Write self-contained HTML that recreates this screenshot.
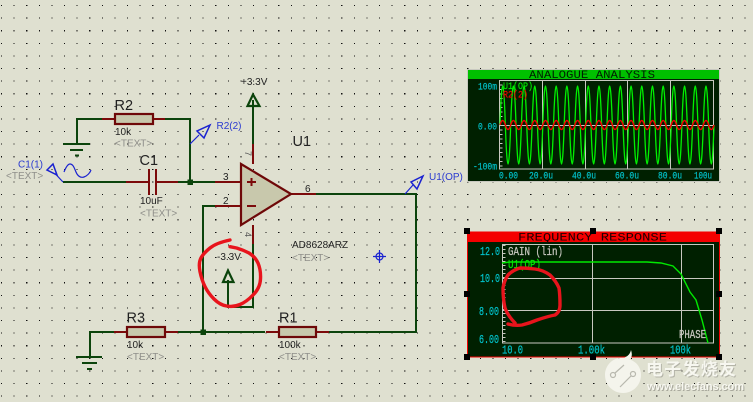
<!DOCTYPE html>
<html><head><meta charset="utf-8"><style>
html,body{margin:0;padding:0;background:#dfe0d0;overflow:hidden}
svg{display:block}
.s{font-family:"Liberation Sans",sans-serif}
.m{font-family:"Liberation Mono",monospace;font-size:10.5px;stroke-width:.2px}
.t{font-family:"Liberation Mono",monospace;font-size:12px;stroke-width:.25px}
.ti{font-family:"Liberation Mono",monospace;font-size:11px}
.c{fill:#00c0c8;stroke:#00c0c8}
.g{fill:#8f8f8a;font-size:10px;font-family:"Liberation Sans",sans-serif}
.k{fill:#222;font-size:10px;font-family:"Liberation Sans",sans-serif}
.b{fill:#2a3ad0;font-size:10px;font-family:"Liberation Sans",sans-serif}
.h{fill:#222;font-size:14.500px;font-family:"Liberation Sans",sans-serif}
</style></head><body>
<svg width="753" height="402" viewBox="0 0 753 402" xmlns="http://www.w3.org/2000/svg">
<defs><filter id="bl"><feGaussianBlur stdDeviation="0.35"/></filter></defs>
<rect width="753" height="402" fill="#dfe0d0"/>
<path shape-rendering="crispEdges" fill="none" stroke="#111" stroke-width="1.1" stroke-dasharray="1.1 11.5" d="M1 5.5H753M1 18.1H753M1 30.7H753M1 43.3H753M1 55.9H753M1 68.5H753M1 81.1H753M1 93.7H753M1 106.3H753M1 118.9H753M1 131.5H753M1 144.1H753M1 156.7H753M1 169.3H753M1 181.9H753M1 194.5H753M1 207.1H753M1 219.7H753M1 232.3H753M1 244.9H753M1 257.5H753M1 270.1H753M1 282.7H753M1 295.3H753M1 307.9H753M1 320.5H753M1 333.1H753M1 345.7H753M1 358.3H753M1 370.9H753M1 383.5H753M1 396.1H753"/>

<!-- green wires -->
<g fill="none" stroke="#0c440c" stroke-width="2">
<path d="M63 182H126M178 182H215M77 144V119H102M165 119H190V182"/>
<path d="M63 144H90M70 150H83M75 155.500H79"/>
<path d="M253 144V100M316 194H416V332H329M265 332H178M114 332H90V357M203 332V206H215M253 244V307H228V280"/>
<path d="M76 357H102M82 363H97M87 369H92"/>
<path d="M253 94.500L247.500 106H259.500Z" stroke-width="2.200"/>
<path d="M228 270.500L223 282H233.500Z" stroke-width="2.200"/>
</g>
<rect x="187.500" y="179.500" width="5.500" height="5.500" fill="#0c440c"/>
<rect x="200.500" y="329.500" width="5.500" height="5.500" fill="#0c440c"/>

<!-- red pins -->
<g fill="none" stroke="#7c0a0a" stroke-width="2">
<path d="M102 119H115M153 119H165M126 182H149M156 182H178M149 169V195M156 169V195"/>
<path d="M215 182H241M215 206H241M291 194H316M253 144V164M253 225V244M114 332H127M165 332H178M266 332H279M316 332H329"/>
</g>
<g stroke="#6e0808" stroke-width="2.200" fill="#c8c8ac">
<rect x="115" y="114" width="38" height="10"/>
<rect x="127" y="327" width="38" height="10"/>
<rect x="279" y="327" width="37" height="10"/>
<path d="M241 164V225L291 194Z"/>
</g>
<path d="M247 182H256M251.500 178V186M247 206H256" stroke="#7c0a0a" stroke-width="2" fill="none"/>

<!-- blue -->
<g fill="none" stroke="#1a22d0" stroke-width="1.200">
<path d="M63 182L55 173.500"/>
<path d="M47 170L53 164L57 175Z" stroke-width="1.500"/>
<path d="M64 172C66 167 68 164 70 164C74 164 75 171 77 174C79 177 81 178 84 177C87 176 90 173 91 170"/>
<path d="M190 144L199 135"/>
<path d="M210 125L197 131L204 138Z" stroke-width="1.500"/>
<path d="M405 194L413 185"/>
<path d="M423 176L411 182L417 189Z" stroke-width="1.500"/>
<circle cx="379.500" cy="256.500" r="3.500"/>
<path d="M379.500 250V263M373 256.500H386"/>
</g>

<!-- schematic labels -->
<text class="h" x="114.500" y="110">R2</text>
<text class="h" x="139.500" y="165">C1</text>
<text class="h" x="292.500" y="146">U1</text>
<text class="h" x="126.500" y="322.500">R3</text>
<text class="h" x="279" y="322.500">R1</text>
<text class="k" x="115" y="135">10k</text>
<text class="g" x="115" y="146.500">&lt;TEXT&gt;</text>
<text class="k" x="140" y="204">10uF</text>
<text class="g" x="140" y="216.500">&lt;TEXT&gt;</text>
<text class="b" x="18" y="167.500">C1(1)</text>
<text class="g" x="6" y="179">&lt;TEXT&gt;</text>
<text class="b" x="216.500" y="129">R2(2)</text>
<text class="b" x="429" y="180">U1(OP)</text>
<text class="k" x="241" y="85">+3.3V</text>
<text class="k" x="217" y="260">-3.3V</text>
<text class="k" x="292" y="248">AD8628ARZ</text>
<text class="g" x="292" y="261">&lt;TEXT&gt;</text>
<text class="k" x="127" y="348">10k</text>
<text class="g" x="127" y="360">&lt;TEXT&gt;</text>
<text class="k" x="279" y="348">100k</text>
<text class="g" x="279" y="360">&lt;TEXT&gt;</text>
<text class="k" x="223" y="180">3</text>
<text class="k" x="223" y="204">2</text>
<text class="k" x="305" y="192">6</text>
<text transform="translate(245,151) rotate(90)" style="font-size:9px;fill:#555;font-family:'Liberation Sans',sans-serif">7</text>
<text transform="translate(245,232) rotate(90)" style="font-size:9px;fill:#555;font-family:'Liberation Sans',sans-serif">4</text>

<!-- Analogue graph -->
<rect x="467.500" y="69.500" width="252" height="112" fill="#002000" stroke="#c8c8c0"/>
<rect x="468" y="70" width="251" height="9" fill="#00c000"/>
<text class="ti" x="529" y="78" textLength="126" lengthAdjust="spacingAndGlyphs" fill="#002000">ANALOGUE ANALYSIS</text>
<g fill="none" stroke="#c8c8c0" stroke-width="1.200" shape-rendering="crispEdges">
<rect x="499.500" y="80.500" width="214" height="88.500"/>
<path d="M542.500 81V169M585.500 81V169M627.500 81V169M670.500 81V169M500 125.500H713"/>
</g>
<path d="M501 80V169" stroke="#c8c8c0" stroke-width="3" stroke-dasharray="1 3.500" fill="none"/>
<path fill="none" stroke="#00f000" stroke-width="1.300" d="M500 125q2.670-78 5.350 0t5.350 0t5.350 0t5.350 0t5.350 0t5.350 0t5.350 0t5.350 0t5.350 0t5.350 0t5.350 0t5.350 0t5.350 0t5.350 0t5.350 0t5.350 0t5.350 0t5.350 0t5.350 0t5.350 0t5.350 0t5.350 0t5.350 0t5.350 0t5.350 0t5.350 0t5.350 0t5.350 0t5.350 0t5.350 0t5.350 0t5.350 0t5.350 0t5.350 0t5.350 0t5.350 0t5.350 0t5.350 0t5.350 0t5.350 0"/>
<path fill="none" stroke="#f00000" stroke-width="1.500" d="M500 125q2.670-9 5.350 0t5.350 0t5.350 0t5.350 0t5.350 0t5.350 0t5.350 0t5.350 0t5.350 0t5.350 0t5.350 0t5.350 0t5.350 0t5.350 0t5.350 0t5.350 0t5.350 0t5.350 0t5.350 0t5.350 0t5.350 0t5.350 0t5.350 0t5.350 0t5.350 0t5.350 0t5.350 0t5.350 0t5.350 0t5.350 0t5.350 0t5.350 0t5.350 0t5.350 0t5.350 0t5.350 0t5.350 0t5.350 0t5.350 0t5.350 0"/>
<text class="m c" x="478" y="89.500" textLength="19" lengthAdjust="spacingAndGlyphs">100m</text>
<text class="m c" x="478" y="129.500" textLength="19" lengthAdjust="spacingAndGlyphs">0.00</text>
<text class="m c" x="473" y="169.500" textLength="24" lengthAdjust="spacingAndGlyphs">-100m</text>
<text class="m c" x="499" y="178.500" textLength="19" lengthAdjust="spacingAndGlyphs">0.00</text>
<text class="m c" x="529" y="178.500" textLength="24" lengthAdjust="spacingAndGlyphs">20.0u</text>
<text class="m c" x="572" y="178.500" textLength="24" lengthAdjust="spacingAndGlyphs">40.0u</text>
<text class="m c" x="615" y="178.500" textLength="24" lengthAdjust="spacingAndGlyphs">60.0u</text>
<text class="m c" x="658" y="178.500" textLength="24" lengthAdjust="spacingAndGlyphs">80.0u</text>
<text class="m c" x="694" y="178.500" textLength="18" lengthAdjust="spacingAndGlyphs">100u</text>
<text class="m" x="503" y="89" textLength="30" lengthAdjust="spacingAndGlyphs" fill="#00e800" stroke="#00e800">U1(OP)</text>
<text class="m" x="503" y="97.500" textLength="25" lengthAdjust="spacingAndGlyphs" fill="#f00000" stroke="#f00000">R2(2)</text>

<!-- Frequency graph -->
<rect x="467.500" y="232" width="252" height="125" fill="#002000" stroke="#f00000"/>
<rect x="467" y="232" width="253" height="10" fill="#f40000"/>
<text class="ti" x="518" y="240.500" textLength="149" lengthAdjust="spacingAndGlyphs" fill="#200000">FREQUENCY RESPONSE</text>
<g fill="none" stroke="#c8c8c0" stroke-width="1.200" shape-rendering="crispEdges">
<rect x="502.500" y="244.500" width="211" height="98.500"/>
<path d="M592.500 245V343M681.500 245V343M503 278.500H713M503 310.500H713"/>
</g>
<path d="M504 245V343" stroke="#c8c8c0" stroke-width="3" stroke-dasharray="1 3" fill="none"/>
<path fill="none" stroke="#00e800" stroke-width="1.400" d="M502 263L510 262H647L661 263L673 266L681 274L690 292L696 300L702 320L708 343"/>
<text class="t c" x="480" y="255" textLength="20" lengthAdjust="spacingAndGlyphs">12.0</text>
<text class="t c" x="480" y="282" textLength="20" lengthAdjust="spacingAndGlyphs">10.0</text>
<text class="t c" x="479" y="315" textLength="20" lengthAdjust="spacingAndGlyphs">8.00</text>
<text class="t c" x="479" y="343" textLength="20" lengthAdjust="spacingAndGlyphs">6.00</text>
<text class="t c" x="502" y="353.500" textLength="21" lengthAdjust="spacingAndGlyphs">10.0</text>
<text class="t c" x="578" y="353.500" textLength="27" lengthAdjust="spacingAndGlyphs">1.00k</text>
<text class="t c" x="670" y="353.500" textLength="21" lengthAdjust="spacingAndGlyphs">100k</text>
<text class="t" x="508" y="255" textLength="55" lengthAdjust="spacingAndGlyphs" fill="#c8c8c0" stroke="#c8c8c0">GAIN (lin)</text>
<text class="t" x="508" y="268" textLength="33" lengthAdjust="spacingAndGlyphs" fill="#00e800" stroke="#00e800">U1(OP)</text>
<text class="t" x="679" y="338" textLength="27" lengthAdjust="spacingAndGlyphs" fill="#c8c8c0" stroke="#c8c8c0">PHASE</text>
<g fill="#000">
<rect x="464" y="228" width="6" height="6"/><rect x="590" y="228" width="6" height="6"/><rect x="716" y="228" width="6" height="6"/>
<rect x="464" y="291" width="6" height="6"/><rect x="716" y="291" width="6" height="6"/>
<rect x="464" y="354" width="6" height="6"/><rect x="590" y="354" width="6" height="6"/><rect x="716" y="354" width="6" height="6"/>
</g>

<!-- red scribbles -->
<g fill="none" stroke="#e8141c" stroke-width="3.400" stroke-linecap="round" stroke-linejoin="round">
<path d="M230 240Q216.700 242.700 210 248Q203.300 253.300 200.800 258.300Q198.300 263.300 200 271.600Q201.700 280 205 286.600Q208.300 293.300 214 299Q220 305 226.600 306Q233.300 307.300 240 304.500Q246.700 301.700 253 295Q260 288.300 260.500 279Q261 270 258 263Q255 256.700 249 253Q243.300 250 236.600 248L230 246.700"/>
<path d="M508 324Q515 326 522 325Q530 323 537 320Q549 316 555 315Q560 312 560 305Q560 295 559 288Q556 281 550 275Q543 270 535 269Q527 268 520 268Q513 270 508 275Q504 281 503 288Q503 299 505 308Q508 316 515 323"/>
</g>

<!-- watermark -->
<path fill="#f4f4ec" filter="url(#bl)" d="M631 350C633 356 631 360 628 359C636 361 641 367 641 375C641 385 633 393 623 393C613 393 605 385 605 375C605 366 612 358 621 358C626 358 630 355 631 350Z"/>
<g fill="none" stroke="#b8b8ae" stroke-width="1.200">
<circle cx="613" cy="375" r="2.500"/><circle cx="633" cy="374" r="2.500"/>
<path d="M615 373L624 365M631 376L620 387"/>
</g>
<g filter="url(#bl)">
<text x="647" y="376" textLength="90" style="font-family:'Noto Sans CJK SC','WenQuanYi Zen Hei',sans-serif;font-size:17px;font-weight:bold" fill="#b4b4a8">电子发烧友</text>
<text x="646" y="375" textLength="90" style="font-family:'Noto Sans CJK SC','WenQuanYi Zen Hei',sans-serif;font-size:17px;font-weight:bold" fill="#f7f7f0">电子发烧友</text>
<text class="s" x="648" y="391" textLength="97" style="font-size:11px;font-weight:bold" fill="#a8a89c">www.elecfans.com</text>
<text class="s" x="647" y="390" textLength="97" style="font-size:11px;font-weight:bold" fill="#f7f7f0">www.elecfans.com</text>
</g>
</svg>
</body></html>
